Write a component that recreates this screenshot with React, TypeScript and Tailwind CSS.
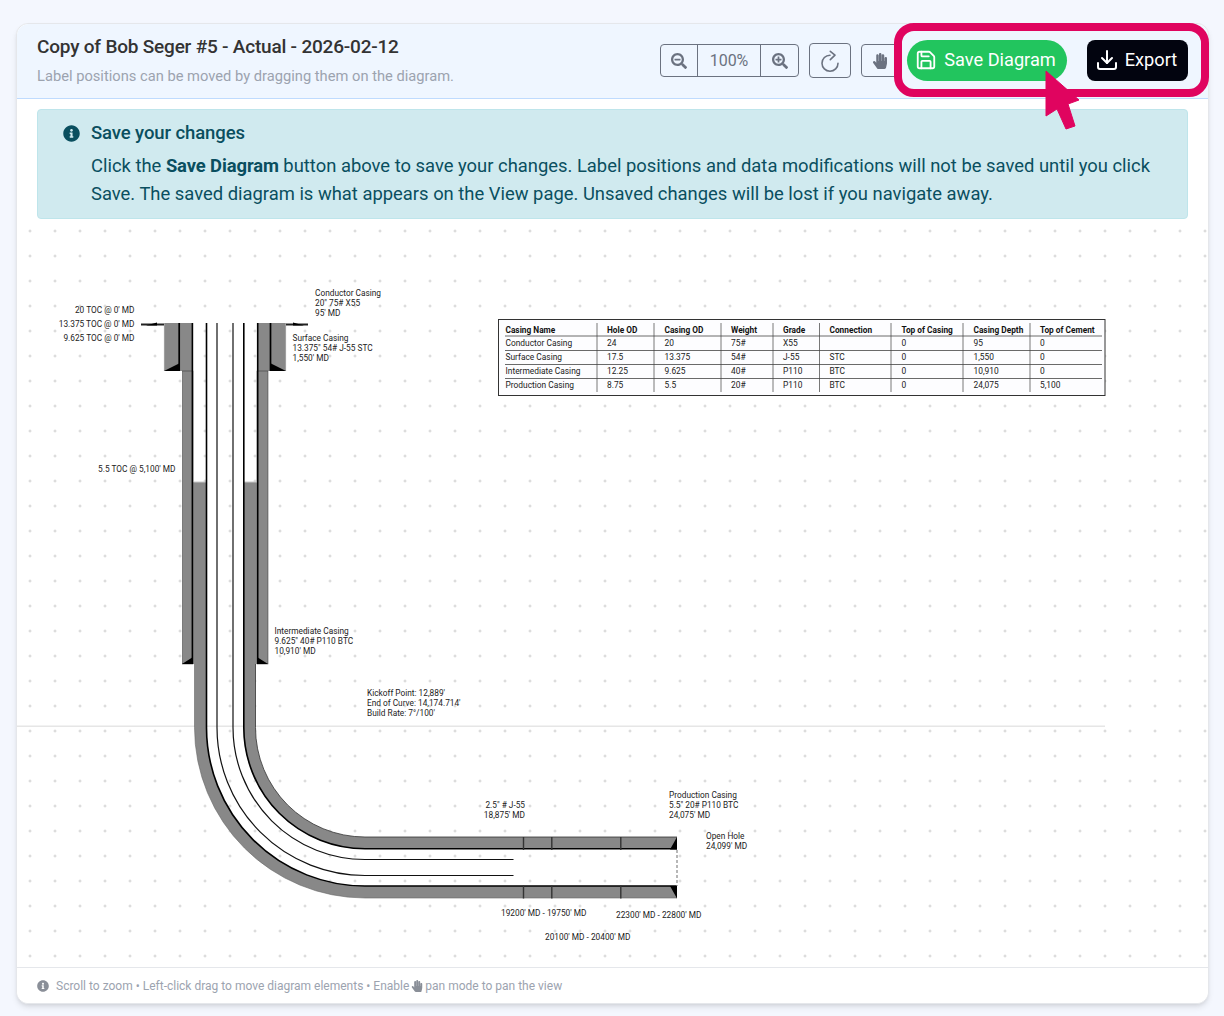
import React from "react";
import { FaSearchMinus, FaSearchPlus, FaHandPaper, FaInfoCircle } from "react-icons/fa";
import { Save, Download } from "lucide-react";

const columns = [
  { x: 505.5, label: "Casing Name" },
  { x: 607, label: "Hole OD" },
  { x: 664.5, label: "Casing OD" },
  { x: 731, label: "Weight" },
  { x: 783, label: "Grade" },
  { x: 829.5, label: "Connection" },
  { x: 901.5, label: "Top of Casing" },
  { x: 973.5, label: "Casing Depth" },
  { x: 1040, label: "Top of Cement" },
];
const rows = [
  ["Conductor Casing", "24", "20", "75#", "X55", "", "0", "95", "0"],
  ["Surface Casing", "17.5", "13.375", "54#", "J-55", "STC", "0", "1,550", "0"],
  ["Intermediate Casing", "12.25", "9.625", "40#", "P110", "BTC", "0", "10,910", "0"],
  ["Production Casing", "8.75", "5.5", "20#", "P110", "BTC", "0", "24,075", "5,100"],
];
const separators = [597, 654, 721, 773, 819.5, 891, 963, 1030];

const labels: { x: number; y: number; t: string; a?: "end" }[] = [
  { x: 315, y: 296, t: "Conductor Casing" },
  { x: 315, y: 306, t: "20\" 75# X55" },
  { x: 315, y: 316, t: "95' MD" },
  { x: 134.5, y: 313, t: "20 TOC @ 0' MD", a: "end" },
  { x: 134.5, y: 327, t: "13.375 TOC @ 0' MD", a: "end" },
  { x: 134.5, y: 341, t: "9.625 TOC @ 0' MD", a: "end" },
  { x: 292.5, y: 341, t: "Surface Casing" },
  { x: 292.5, y: 351, t: "13.375\" 54# J-55 STC" },
  { x: 292.5, y: 361, t: "1,550' MD" },
  { x: 175.5, y: 472, t: "5.5 TOC @ 5,100' MD", a: "end" },
  { x: 274.5, y: 634, t: "Intermediate Casing" },
  { x: 274.5, y: 644, t: "9.625\" 40# P110 BTC" },
  { x: 274.5, y: 654, t: "10,910' MD" },
  { x: 367, y: 696, t: "Kickoff Point: 12,889'" },
  { x: 367, y: 706, t: "End of Curve: 14,174.714'" },
  { x: 367, y: 716, t: "Build Rate: 7°/100'" },
  { x: 525, y: 808, t: "2.5\" # J-55", a: "end" },
  { x: 525, y: 818, t: "18,875' MD", a: "end" },
  { x: 669, y: 798, t: "Production Casing" },
  { x: 669, y: 808, t: "5.5\" 20# P110 BTC" },
  { x: 669, y: 818, t: "24,075' MD" },
  { x: 706, y: 839, t: "Open Hole" },
  { x: 706, y: 849, t: "24,099' MD" },
  { x: 501, y: 916, t: "19200' MD - 19750' MD" },
  { x: 616, y: 918, t: "22300' MD - 22800' MD" },
  { x: 545, y: 940, t: "20100' MD - 20400' MD" },
];

/* J-shaped pipe path: vertical at centre offset, curve about (365,727.5), horizontal to endX */
const bend = (r: number, startY: number, endX: number) =>
  `M${365 - r} ${startY} L${365 - r} 727.5 A${r} ${r} 0 0 0 365 ${727.5 + r} L${endX} ${727.5 + r}`;

function Diagram() {
  const f = { fontFamily: "Roboto, sans-serif" };
  return (
    <svg viewBox="17 229 1191 738" className="block h-[738px] w-[1191px]" style={f}>
      <defs>
        <pattern id="dots" x="17" y="231" width="25" height="25" patternUnits="userSpaceOnUse">
          <path d="M13 -1.5V1.5M11.5 0H14.5M13 23.5V26.5M11.5 25H14.5" stroke="#c9c9c9" strokeWidth="0.8" />
        </pattern>
      </defs>
      <rect x="17" y="229" width="1191" height="738" fill="#fff" />
      <rect x="17" y="229" width="1191" height="738" fill="url(#dots)" />
      <rect x="17" y="725.5" width="1088" height="1.5" fill="#e6e6e6" />

      {/* conductor and surface strings */}
      <rect x="164" y="323" width="29" height="48" fill="#888" />
      <rect x="257" y="323" width="29" height="48" fill="#888" />
      <path d="M164.3 323V371 M285.7 323V371" stroke="#bbb" strokeWidth="0.6" />
      <path d="M164 371L180 371L180 363Z M286 371L270 371L270 363Z" fill="#000" />
      {/* hangers */}
      <path d="M141 324.5H164 M286 324.5H308" stroke="#222" strokeWidth="2" />
      <path d="M146 325.5L157 322.5V325.5Z M304 325.5L293 322.5V325.5Z" fill="#000" />
      <path d="M179.2 323V371 M270.5 323V371" stroke="#000" strokeWidth="1.7" />

      {/* intermediate */}
      <rect x="182.5" y="371" width="10.5" height="293" fill="#888" stroke="#333" strokeWidth="0.5" />
      <rect x="257" y="371" width="11" height="293" fill="#888" stroke="#333" strokeWidth="0.5" />
      <path d="M182 664H193V657Z M268 664H257V657Z" fill="#000" />

      {/* production cement, J shape */}
      <path
        d={`M193 482 L206.5 482 L206.5 727.5 A158.5 158.5 0 0 0 365 886 L677 886 L677 898 L365 898 A170.5 170.5 0 0 1 194.5 727.5 L194.5 664 L193 664 Z`}
        fill="#888"
      />
      <path
        d={`M243.5 482 L257 482 L257 664 L255.5 664 L255.5 727.5 A109.5 109.5 0 0 0 365 837 L677 837 L677 849 L365 849 A121.5 121.5 0 0 1 243.5 727.5 Z`}
        fill="#888"
      />
      <path d="M193.5 482H206 M244 482H257" stroke="#c8c8c8" strokeWidth="1" />
      <path d={bend(170.5, 664, 677)} fill="none" stroke="#666" strokeWidth="0.6" />
      <path d={bend(109.5, 664, 677)} fill="none" stroke="#333" strokeWidth="0.8" />

      {/* intermediate ID lines */}
      <path d="M192.4 323V664 M257.7 323V664" stroke="#000" strokeWidth="1.6" />
      {/* production casing */}
      <path d={bend(158.5, 323, 677)} fill="none" stroke="#000" strokeWidth="1.6" />
      <path d={bend(121.2, 323, 677)} fill="none" stroke="#000" strokeWidth="1.6" />
      {/* tubing */}
      <path d={bend(148, 323, 513.5)} fill="none" stroke="#111" strokeWidth="1.2" />
      <path d={bend(132, 323, 513.5)} fill="none" stroke="#111" strokeWidth="1.2" />

      {/* perforations */}
      <path
        d="M523.5 837V850 M551.8 837V850 M620.8 837V850 M523.5 885.5V898.5 M551.8 885.5V898.5 M620.8 885.5V898.5"
        stroke="#333"
        strokeWidth="1.4"
      />
      <path d="M670 849.5L677 849.5L677 837Z M670 886L677 886L677 898.5Z" fill="#000" />
      <path d="M677 850V886" stroke="#888" strokeWidth="1.2" strokeDasharray="3 2" />

      {/* casing table */}
      <rect x="498.5" y="319.5" width="606.5" height="76" fill="#fdfdff" stroke="#333" strokeWidth="1" />
      {separators.map((x) => (
        <line key={x} x1={x} x2={x} y1="323" y2="392" stroke="#555" strokeWidth="0.8" />
      ))}
      {[336, 350.5, 364.5, 378.5].map((y) => (
        <line key={y} x1="505" x2="1102" y1={y} y2={y} stroke="#444" strokeWidth="0.8" />
      ))}
      {columns.map((c) => (
        <text key={c.label} x={c.x} y="333" fontSize="8.3" fontWeight="700" fill="#111">
          {c.label}
        </text>
      ))}
      {rows.map((r, i) =>
        r.map((v, j) => (
          <text key={`${i}-${j}`} x={columns[j].x} y={346 + i * 14} fontSize="8.4" fill="#222">
            {v}
          </text>
        )),
      )}

      {labels.map((l) => (
        <text key={l.t} x={l.x} y={l.y} fontSize="8.3" fill="#222" textAnchor={l.a ?? "start"}>
          {l.t}
        </text>
      ))}
    </svg>
  );
}

export default function App() {
  return (
    <div className="min-h-[1016px] bg-[#f4f7fe] pt-[23px] pl-4 pr-4 font-['Roboto',sans-serif]">
      <div className="relative w-[1193px] h-[981px] rounded-xl border border-[#e5e7eb] bg-white shadow-md flex flex-col">
        {/* header */}
        <div className="relative flex h-[75px] shrink-0 items-start justify-between rounded-t-xl border-b border-[#bfdbfe] bg-[#eff6ff] pl-5 pr-5">
          <div className="pt-[9px]">
            <h1 className="text-[19px] leading-[28px] font-medium tracking-[-0.2px] text-[#333]">
              Copy of Bob Seger #5 - Actual - 2026-02-12
            </h1>
            <p className="mt-[4px] text-[14.7px] leading-[22px] text-[#9ca3af]">
              Label positions can be moved by dragging them on the diagram.
            </p>
          </div>

          <div className="flex items-center pt-4">
            <div className="flex h-[33px] items-stretch rounded border border-[#6b7280] text-[#6b7280]">
              <button className="flex w-[37px] items-center justify-center border-r border-[#6b7280]">
                <FaSearchMinus className="h-4 w-4" />
              </button>
              <span className="flex w-[63px] items-center justify-center border-r border-[#6b7280] text-[16px]">100%</span>
              <button className="flex w-[37px] items-center justify-center">
                <FaSearchPlus className="h-4 w-4" />
              </button>
            </div>
            <button className="ml-[10px] flex h-[35px] w-[42px] items-center justify-center rounded border border-[#6b7280] text-[#6b7280]">
              <svg viewBox="0 0 18 22" className="h-[22px] w-[18px]" fill="none" stroke="currentColor" strokeWidth="1.6" strokeLinecap="round" strokeLinejoin="round">
                <path d="M9 5.2A8 8 0 1 0 17 13.2" />
                <path d="M9.3 1.3L14 5.2L9.3 9.7" />
              </svg>
            </button>
            <button className="ml-[10px] flex h-[33px] w-[38px] items-center justify-center rounded border border-[#6b7280] text-[#6b7280]">
              <FaHandPaper className="h-4 w-4" />
            </button>
            <div className="relative ml-[8px] flex items-center">
              <div className="absolute -left-[13px] -top-[17px] h-[74px] w-[315px] rounded-[20px] border-8 border-[#e0045f] bg-[#eff6ff]" />
              <button className="relative flex h-[41px] w-[160px] items-center justify-center gap-[7px] rounded-full bg-[#22c55e] pr-[3px] pb-[2px] text-[18.2px] text-white">
                <Save className="h-[22px] w-[22px]" />
                Save Diagram
              </button>
              <button className="relative ml-5 flex h-[41px] w-[101px] items-center justify-center gap-[6px] rounded-lg bg-[#02040f] pr-[3px] pb-[2px] text-[18.2px] text-white">
                <Download className="h-6 w-6" />
                Export
              </button>
            </div>
          </div>
        </div>

        {/* alert */}
        <div className="mx-5 mt-[10px] h-[110px] shrink-0 rounded border border-[#bee5eb] bg-[#d0eaef] pl-[25px] pr-4 pt-[10px] text-[#0a4f5f]">
          <div className="flex items-center gap-[11px]">
            <FaInfoCircle className="h-[17px] w-[17px] text-[#0a4f5f]" />
            <span className="text-[18.5px] leading-[26px] font-medium tracking-[-0.1px]">Save your changes</span>
          </div>
          <p className="mt-[6px] pl-[28px] text-[18.4px] leading-[28px]">
            Click the <strong className="font-bold tracking-[-0.1px]">Save Diagram</strong> button above to save your changes. Label positions and data modifications will not be saved until you click Save. The saved diagram is what appears on the View page. Unsaved changes will be lost if you navigate away.
          </p>
        </div>

        {/* diagram */}
        <div className="mt-[10px] shrink-0">
          <Diagram />
        </div>

        {/* footer */}
        <div className="flex flex-1 items-center gap-[7px] rounded-b-xl border-t border-[#e5e7eb] bg-white pl-5 text-[12px] text-[#9ca3af]">
          <FaInfoCircle className="h-3 w-3 text-[#8a8f98]" />
          <span className="flex items-center gap-[2px]">
            Scroll to zoom • Left-click drag to move diagram elements • Enable
            <FaHandPaper className="h-3 w-3 text-[#8a8f98]" />
            pan mode to pan the view
          </span>
        </div>

        {/* pointer callout */}
        <svg className="absolute left-[1028px] top-[46px] h-[60px] w-[36px]" viewBox="1045 69 36 60">
          <path d="M1046 70L1079 99L1068 103L1075 125L1066 128L1057 108L1046 115Z" fill="#e0045f" stroke="#e0045f" strokeWidth="1" strokeLinejoin="round" />
        </svg>
      </div>
    </div>
  );
}
